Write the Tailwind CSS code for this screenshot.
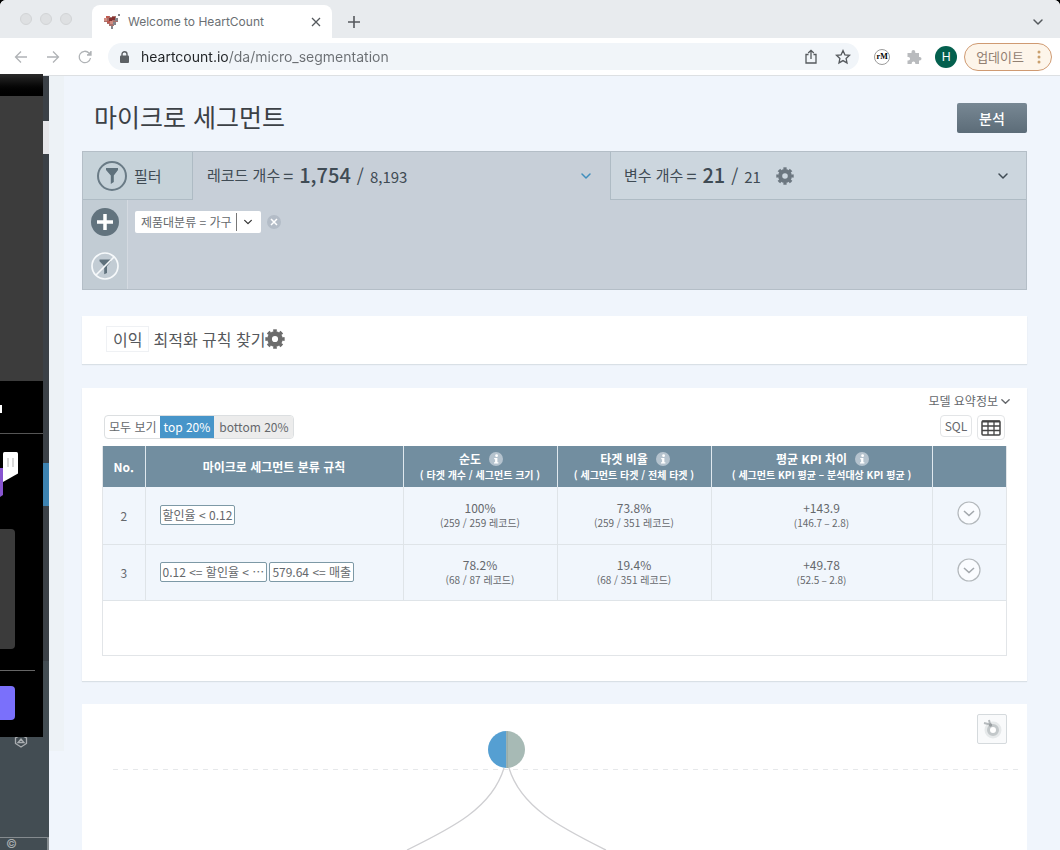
<!DOCTYPE html>
<html lang="ko">
<head>
    <meta charset="UTF-8">
    <meta name="viewport" content="width=device-width, initial-scale=1.0">
    <title>Welcome to HeartCount</title>
    <script src="https://cdn.jsdelivr.net/npm/@tailwindcss/browser@4"></script>
</head>
<body class="bg-black h-screen overflow-hidden font-['Noto_Sans_CJK_KR',sans-serif] text-xs text-[#65686c]">

    <!-- Shared icons -->
    <svg class="hidden">
        <symbol id="chevron" viewBox="0 0 12 12"><path d="M2 4l4 4 4-4" fill="none" stroke="currentColor" stroke-width="1.5" stroke-linecap="round" stroke-linejoin="round"/></symbol>
        <symbol id="gear" viewBox="0 0 20 20">
            <circle cx="10" cy="10" r="5.4" fill="none" stroke="currentColor" stroke-width="4.6"/>
            <circle cx="10" cy="10" r="8.3" fill="none" stroke="currentColor" stroke-width="2.8" pathLength="32" stroke-dasharray="2.2 1.8" stroke-dashoffset="1.1"/>
        </symbol>
        <symbol id="info" viewBox="0 0 14 14">
            <circle cx="7" cy="7" r="7" fill="#b5c3ce"/>
            <circle cx="7.6" cy="3.7" r="1.4" fill="#fff"/>
            <path d="M5.2 6h3.2v4.2h1v1.2H5v-1.2h1.1V7.2h-.9z" fill="#fff"/>
        </symbol>
        <symbol id="expand" viewBox="0 0 24 24"><circle cx="12" cy="12" r="11" fill="#fafcff" stroke="#b3b8bc" stroke-width="1.2"/><path d="M7 10l5 4.500 5-4.500" fill="none" stroke="#a3a8ad" stroke-width="1.6"/></symbol>
        <symbol id="funnel" viewBox="0 0 14 18"><path d="M1 1h12v2L8.8 8.5V15L5.8 17V8.500L1 3z" fill="#5f717c"/></symbol>
    </svg>

    <div class="h-full flex flex-col rounded-t-md overflow-hidden bg-white">
        <!-- Browser tabs -->
        <div class="h-[38px] shrink-0 flex items-end bg-[#e8ebee] font-[Inter,sans-serif]">
            <div class="w-23 h-full flex items-center gap-2 pl-5">
                <span class="size-3 rounded-full bg-[#dee0e2] border border-[#d2d4d6]"></span>
                <span class="size-3 rounded-full bg-[#dee0e2] border border-[#d2d4d6]"></span>
                <span class="size-3 rounded-full bg-[#dee0e2] border border-[#d2d4d6]"></span>
            </div>
            <div class="w-60 h-[33px] bg-white rounded-t-lg flex items-center pl-3 pr-2">
                <svg class="size-4 mr-2" viewBox="0 0 16 16">
                    <path d="M0 4h2V2h4v1h2V2h4v2h2v4h-2v2h-2v2H9v3H7v-3H5v-2H3V8H0z" fill="#a9716c"/>
                    <path d="M0 4h3v3H0zM6 7h3v3H6z" fill="#d38d82"/>
                    <path d="M5 4h3v3H5zM8 3h3v3H8z" fill="#84302f"/>
                    <path d="M2 2h3v2H2zM3 7h3v2H3z" fill="#c05a50"/>
                    <path d="M11 4h3v3h-3zM9 8h3v3H9zM7 12h2v3H7zM14 0h2v2h-2z" fill="#85858b"/>
                </svg>
                <span class="flex-1 text-xs leading-4 text-[#6b6f73]">Welcome to HeartCount</span>
                <button aria-label="탭 닫기" class="size-4 grid place-items-center text-[#55595d]">
                    <svg class="size-3" viewBox="0 0 12 12"><path d="M2 2l8 8m0-8l-8 8" stroke="currentColor" stroke-width="1.300"/></svg>
                </button>
            </div>
            <button aria-label="새 탭" class="h-[33px] w-11 grid place-items-center text-[#55595d]">
                <svg class="size-3" viewBox="0 0 12 12"><path d="M6 0v12M0 6h12" stroke="currentColor" stroke-width="1.600"/></svg>
            </button>
            <button aria-label="탭 검색" class="ml-auto h-[33px] w-11 grid place-items-center text-[#55595d]">
                <svg class="size-3"><use href="#chevron"/></svg>
            </button>
        </div>

        <!-- Address bar -->
        <div class="h-[38px] shrink-0 flex items-center bg-white border-b border-[#dde0e3] pr-2 font-[Inter,'Noto_Sans_CJK_KR',sans-serif]">
            <div class="w-27 flex items-center gap-4 pl-[13px] text-[#b0b3b6]">
                <button aria-label="뒤로" class="size-4"><svg viewBox="0 0 16 16" fill="none" stroke="currentColor" stroke-width="1.3"><path d="M14 8H2.500M8 2.500L2.500 8 8 13.500"/></svg></button>
                <button aria-label="앞으로" class="size-4"><svg viewBox="0 0 16 16" fill="none" stroke="currentColor" stroke-width="1.3"><path d="M2 8h11.500M8 2.500L13.500 8 8 13.500"/></svg></button>
                <button aria-label="새로고침" class="size-4"><svg viewBox="0 0 16 16" fill="none" stroke="currentColor" stroke-width="1.3"><path d="M13.500 9A5.700 5.700 0 1 1 12 4l1.500 1.500"/><path d="M14 2v4h-4" fill="currentColor"/></svg></button>
            </div>
            <div class="flex-1 h-[27px] rounded-full bg-[#f1f5f9] flex items-center pl-3 pr-2 gap-4 text-[#55595d]">
                <svg class="w-[9px] h-3 -mr-1" viewBox="0 0 9 12"><rect y="4.500" width="9" height="7.500" rx="1" fill="#5d6165"/><path d="M2 5V3.200a2.500 2.500 0 0 1 5 0V5" fill="none" stroke="#5d6165" stroke-width="1.400"/></svg>
                <input type="text" aria-label="주소" value="heartcount.io/da/micro_segmentation" class="flex-1 min-w-0 text-sm leading-5 outline-none bg-[linear-gradient(to_right,#202326_87px,#6b6f73_87px)] bg-clip-text text-transparent">
                <button aria-label="공유" class="size-4"><svg viewBox="0 0 16 16" fill="none" stroke="currentColor" stroke-width="1.300"><path d="M5.500 5.500H3V14h10V5.500h-2.500M8 10V1.500M5.200 4L8 1.300 10.800 4"/></svg></button>
                <button aria-label="북마크" class="size-4"><svg viewBox="0 0 16 16" fill="none" stroke="currentColor" stroke-width="1.300"><path d="M8 1.600l1.900 4.200 4.600.5-3.400 3.100.9 4.500L8 11.600l-4 2.300.9-4.500L1.500 6.300l4.600-.5z"/></svg></button>
            </div>
            <div class="flex items-center ml-[15px]">
                <button class="size-4 rounded-full border border-[#9b9b9b] bg-white text-[8px] leading-3 font-bold font-['Liberation_Serif',serif] text-black">rM</button>
                <button aria-label="확장 프로그램" class="size-4 ml-4 text-[#b9bbbe]"><svg viewBox="0 0 16 16" fill="currentColor"><path d="M1.500 4h4V3a1.900 1.900 0 0 1 3.800 0v1H13v4h.7a1.800 1.800 0 0 1 0 3.600H13V15H9.300v-.8a1.800 1.800 0 0 0-3.600 0v.8H1.500v-3.500h.8a1.800 1.800 0 0 0 0-3.600h-.8z"/></svg></button>
                <button class="size-[22px] ml-[13px] rounded-full bg-[#04604e] text-white text-xs">H</button>
                <button class="h-7 ml-[7px] pl-[11px] pr-2 rounded-full border border-[#cf9a72] bg-[#fdf5ea] flex items-center gap-[7px] text-[13px] leading-5 text-[#918072]">업데이트
                    <svg class="w-3 h-4" viewBox="0 0 12 16" fill="#c9a06e"><circle cx="8" cy="3" r="1.500"/><circle cx="8" cy="8" r="1.500"/><circle cx="8" cy="13" r="1.500"/></svg>
                </button>
            </div>
        </div>

        <div class="relative flex-1 min-h-0 flex bg-[#f0f5fc]">
            <!-- App sidebar -->
            <aside class="w-[49px] shrink-0 bg-[#3b4147] flex flex-col items-end">
                <div class="h-[45px]"></div>
                <div class="h-[33px] w-2 bg-[#e6e6e9]"></div>
                <div class="h-[309px]"></div>
                <div class="h-[43px] w-2 bg-[#3d83b1]"></div>
                <div class="h-[155px]"></div>
                <div class="flex-1 w-full bg-[#434d53] flex flex-col text-[#a9adb0]">
                    <svg class="w-[14px] h-[14px] ml-[14px] mt-[73px]" viewBox="0 0 14 14" fill="none" stroke="currentColor"><path d="M7 1l5.500 3v5.500L7 13l-5.500-3.500V4zM4 8.500h6L7 5z" stroke-width="1.300"/></svg>
                    <div class="flex-1"></div>
                    <div class="h-[13px] border-t border-r-2 border-[#858b8f] pl-[6px] text-xs leading-3 font-[Inter,sans-serif]">©</div>
                </div>
            </aside>

            <!-- Window floating over the sidebar -->
            <div class="absolute left-0 -top-[2px] w-[43px] h-[663px] bg-black">
                <div class="h-[22px] bg-linear-to-b from-[#2b2b2b] to-black"></div>
                <div class="h-[285px] bg-[#3c3c3c]"></div>
                <div class="h-[53px] border-b border-[#555] pt-[24px]"><div class="w-[2px] h-2 bg-white"></div></div>
                <div class="h-[95px] pt-[18px]">
                    <svg class="w-5 h-[48px]" viewBox="0 0 20 48"><path d="M0 16h3v27l-3 2z" fill="#8855d0"/><path d="M3 1.500Q3 0 4.500 0h12Q18 0 18 1.500v20L3 30z" fill="#fff"/><path d="M8 6v9M13 6v9" stroke="#ccc" stroke-width="1.500"/></svg>
                </div>
                <div class="h-[120px] w-[15px] rounded-r-sm bg-[#3b3b3b]"></div>
                <div class="h-[22px] w-[35px] border-b border-[#666]"></div>
                <div class="h-[34px] w-[15px] mt-[15px] rounded-r-sm bg-[#7a70fb]"></div>
            </div>

            <div class="w-[15px] h-[675px] shrink-0 bg-[#edf2f6]"></div>

            <main class="flex-1 min-w-0 pl-[18px] pr-[33px] pt-[27px]">
                <header class="flex items-start justify-between h-[30px] pl-3">
                    <h1 class="text-[25px] leading-[26px] text-[#3c4146]">마이크로 세그먼트</h1>
                    <button class="w-[70px] h-[30px] rounded-xs bg-linear-to-b from-[#788894] to-[#5c6c78] text-white text-sm font-medium">분석</button>
                </header>

                <!-- Filter panel -->
                <section class="mt-[18px] bg-[#c7cfd8] border border-[#b4bec7] text-[#3f4b54]">
                    <div class="h-12 flex text-[15px] leading-5">
                        <div class="w-[110px] flex items-center gap-[7px] pl-[14px] bg-[#c6d2d9] border-r border-b border-[#aebbc4]">
                            <span class="size-[30px] rounded-full border-2 border-[#6a7b86] grid place-items-center"><svg class="w-[14px] h-[18px]"><use href="#funnel"/></svg></span>
                            필터
                        </div>
                        <button class="flex-1 flex items-center pl-[14px] pr-[18px]">
                            <span class="flex items-center pb-[2px]"><span>레코드 개수</span><span class="text-lg leading-5 ml-[3px]">=</span><strong class="text-xl leading-5 font-medium ml-[6px]">1,754</strong><span class="text-lg leading-5 ml-[6px]">/</span><span class="ml-[6px] pt-1">8,193</span></span>
                            <svg class="size-3 ml-auto text-[#3f8fbd]"><use href="#chevron"/></svg>
                        </button>
                        <div class="flex-1 flex items-center pl-[13px] pr-[17px] bg-[#ccd6de] border-l border-b border-[#aebbc4]">
                            <span class="flex items-center pb-[2px]"><span>변수 개수</span><span class="text-lg leading-5 ml-[3px]">=</span><strong class="text-xl leading-5 font-medium ml-[6px]">21</strong><span class="text-lg leading-5 ml-[6px]">/</span><span class="ml-[6px] pt-1">21</span></span>
                            <button aria-label="변수 설정" class="size-[18px] ml-[15px] text-[#6c7780]"><svg class="size-full"><use href="#gear"/></svg></button>
                            <button aria-label="변수 펼치기" class="size-3 ml-auto"><svg class="size-full"><use href="#chevron"/></svg></button>
                        </div>
                    </div>
                    <div class="h-[89px] flex">
                        <div class="w-[45px] flex flex-col items-center gap-4 pt-2 border-r border-[#d4dae1] bg-[#c2ccd4]">
                            <button aria-label="필터 추가" class="size-7"><svg viewBox="0 0 28 28"><circle cx="14" cy="14" r="14" fill="#62737e"/><path d="M14 6v16M6 14h16" stroke="#fff" stroke-width="3.500"/></svg></button>
                            <button aria-label="필터 해제" class="size-7"><svg viewBox="0 0 28 28"><circle cx="14" cy="14" r="13" fill="none" stroke="#f6f9fb" stroke-width="1.700"/><path d="M8.500 7.500H20v1.800l-4 5V21l-2.800 1.300v-8L8.500 9.300z" fill="#5f717c"/><path d="M5 23L23 5" stroke="#f6f9fb" stroke-width="1.700"/></svg></button>
                        </div>
                        <div class="flex items-start gap-[6px] pt-[11px] pl-[7px]">
                            <button class="h-[22px] flex items-center bg-white rounded-xs pl-[6px] pr-2 leading-4 text-[#65686c]">제품대분류 = 가구<span class="h-[18px] border-l border-[#777] ml-[4px] mr-[6px]"></span><svg class="size-[10px] text-[#333]"><use href="#chevron"/></svg></button>
                            <button aria-label="조건 삭제" class="size-[14px] mt-1 rounded-full bg-[#b3bcc7] text-white"><svg viewBox="0 0 14 14"><path d="M4 4l6 6m0-6l-6 6" stroke="currentColor" stroke-width="1.500"/></svg></button>
                        </div>
                    </div>
                </section>

                <!-- KPI rule finder -->
                <section class="mt-[26px] h-12 bg-white shadow-[0_1px_1px_#d9e0e6] flex items-center pl-6 pb-[2px] text-base leading-6 text-[#55585c]">
                    <span class="border border-[#eff1f4] px-[6px]">이익</span>
                    <span class="ml-1">최적화 규칙 찾기</span>
                    <button aria-label="규칙 설정" class="size-5 text-[#6c6c6c]"><svg class="size-full"><use href="#gear"/></svg></button>
                </section>

                <!-- Segment table -->
                <section class="mt-6 bg-white shadow-[0_1px_1px_#d9e0e6] px-5 pt-[3px] pb-[25px]">
                    <div class="flex justify-end -mr-1">
                        <button class="flex items-center gap-[2px] leading-5">모델 요약정보<svg class="size-[11px]"><use href="#chevron"/></svg></button>
                    </div>
                    <div class="flex items-start mt-1 h-[31px] px-[2px] leading-[22px]">
                        <div class="flex h-6 rounded-sm border border-[#dcdfe1] overflow-hidden">
                            <button class="pl-1 pr-[3px]">모두 보기</button>
                            <button class="px-1 bg-[#4795c9] text-white">top 20%</button>
                            <button class="pl-[5px] pr-1 bg-[#ececec]">bottom 20%</button>
                        </div>
                        <button class="ml-auto w-8 h-[22px] leading-5 rounded-sm border border-[#e3e5e7]">SQL</button>
                        <button aria-label="표 보기" class="ml-[5px] w-7 h-[25px] grid place-items-center rounded-sm border border-[#e3e5e7]">
                            <svg class="w-5 h-4" viewBox="0 0 20 16"><rect x="1" y="1" width="18" height="14" rx="1" fill="none" stroke="#444" stroke-width="1.500"/><path d="M1 1.500h18" stroke="#444" stroke-width="2"/><path d="M1 6h18M1 10.500h18M7 1v14M13 1v14" stroke="#444" stroke-width="1.300"/></svg>
                        </button>
                    </div>
                    <div class="border border-t-0 border-[#e2e5e8]">
                        <table class="w-full table-fixed text-center">
                            <thead class="text-white">
                                <tr class="h-[41px] bg-[#728ea0] leading-4">
                                    <th class="w-[42px]">No.</th>
                                    <th class="border-l border-[#dfe8ee]">마이크로 세그먼트 분류 규칙</th>
                                    <th class="w-[154px] border-l border-[#dfe8ee]"><div class="flex justify-center items-center gap-2 pl-[2px]">순도 <svg class="size-[14px]"><use href="#info"/></svg></div><div class="text-[10px]">( 타겟 개수 / 세그먼트 크기 )</div></th>
                                    <th class="w-[154px] border-l border-[#dfe8ee]"><div class="flex justify-center items-center gap-2 pl-[2px]">타겟 비율 <svg class="size-[14px]"><use href="#info"/></svg></div><div class="text-[10px]">( 세그먼트 타겟 / 전체 타겟 )</div></th>
                                    <th class="w-[221px] border-l border-[#dfe8ee]"><div class="flex justify-center items-center gap-2 pl-[2px]">평균 KPI 차이 <svg class="size-[14px]"><use href="#info"/></svg></div><div class="text-[10px]">( 세그먼트 KPI 평균 – 분석대상 KPI 평균 )</div></th>
                                    <th class="w-[74px] border-l border-[#dfe8ee]" aria-label="상세"></th>
                                </tr>
                            </thead>
                            <tbody class="bg-[#f1f6fc] leading-[15px]">
                                <tr class="h-[57px] border-b border-[#dfe4e8]">
                                    <td>2</td>
                                    <td class="border-l border-[#dfe4e8] text-left pl-[14px]"><div class="flex gap-[3px]"><span class="bg-white border border-[#7d99a6] rounded-xs px-[2px] leading-[18px]">할인율 &lt; 0.12</span></div></td>
                                    <td class="border-l border-[#dfe4e8]">100%<div class="text-[10px]">(259 / 259 레코드)</div></td>
                                    <td class="border-l border-[#dfe4e8]">73.8%<div class="text-[10px]">(259 / 351 레코드)</div></td>
                                    <td class="border-l border-[#dfe4e8]">+143.9<div class="text-[10px]">(146.7 – 2.8)</div></td>
                                    <td class="border-l border-[#dfe4e8]"><button aria-label="펼치기" class="size-6 block mx-auto mb-1"><svg class="size-full"><use href="#expand"/></svg></button></td>
                                </tr>
                                <tr class="h-14 border-b border-[#dfe4e8]">
                                    <td>3</td>
                                    <td class="border-l border-[#dfe4e8] text-left pl-[14px]"><div class="flex gap-[2px]"><span class="bg-white border border-[#7d99a6] rounded-xs px-[2px] leading-[18px]">0.12 &lt;= 할인율 &lt; ⋯</span><span class="bg-white border border-[#7d99a6] rounded-xs px-[2px] leading-[18px]">579.64 &lt;= 매출</span></div></td>
                                    <td class="border-l border-[#dfe4e8]">78.2%<div class="text-[10px]">(68 / 87 레코드)</div></td>
                                    <td class="border-l border-[#dfe4e8]">19.4%<div class="text-[10px]">(68 / 351 레코드)</div></td>
                                    <td class="border-l border-[#dfe4e8]">+49.78<div class="text-[10px]">(52.5 – 2.8)</div></td>
                                    <td class="border-l border-[#dfe4e8]"><button aria-label="펼치기" class="size-6 block mx-auto mb-1"><svg class="size-full"><use href="#expand"/></svg></button></td>
                                </tr>
                            </tbody>
                        </table>
                        <div class="h-[54px]"></div>
                    </div>
                </section>

                <!-- Decision tree -->
                <section class="relative mt-[23px] bg-white">
                    <svg class="w-full h-[400px]" viewBox="0 0 945 400" preserveAspectRatio="xMidYMin slice" fill="none">
                        <path d="M31 65.500h907" stroke="#e6e8ea" stroke-dasharray="5 5"/>
                        <path d="M422 64C410 104 370 124 325 146M427 64C439 104 480 124 524 146" stroke="#cfcfd2" stroke-width="1.300"/>
                        <path d="M424.500 27a18.500 18.500 0 0 0 0 37z" fill="#559fd2"/>
                        <path d="M424.500 27a18.500 18.500 0 0 1 0 37z" fill="#a7bab5"/>
                        <path d="M425 27v37" stroke="#8da09b"/>
                    </svg>
                    <button aria-label="이미지 저장" class="absolute right-5 top-[10px] size-[30px] p-[3px] rounded-xs border border-[#d5dadd] bg-[#f9fafb]">
                        <svg viewBox="0 0 22 22" fill="none"><circle cx="12" cy="12" r="8.500" fill="#e6e9ea"/><circle cx="12" cy="12" r="4.500" fill="#fff" stroke="#c3c8ca" stroke-width="3"/><path d="M3 5l6 1.500M8 2l1.500 6" stroke="#b5babd" stroke-width="2"/><circle cx="9.500" cy="7" r="1.700" fill="#9a9fa2"/></svg>
                    </button>
                </section>
            </main>
        </div>
    </div>
</body>
</html>
